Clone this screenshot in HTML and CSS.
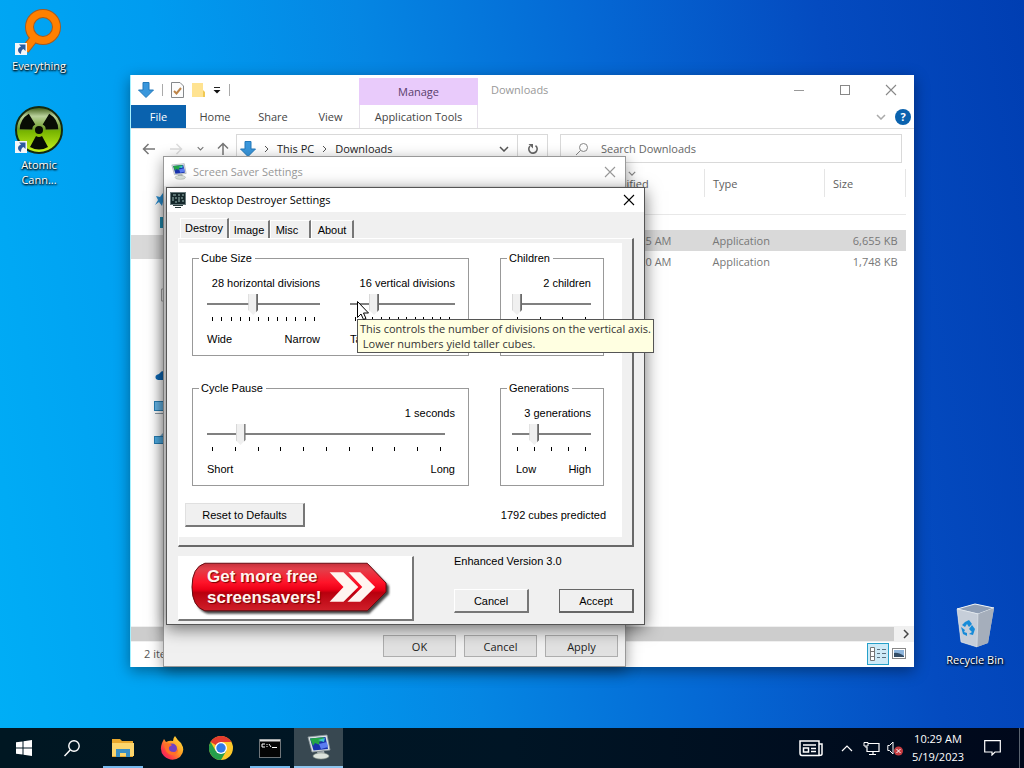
FILE: index.html
```html
<!DOCTYPE html>
<html lang="en">
<head>
    <meta charset="UTF-8">
    <meta name="viewport" content="width=device-width, initial-scale=1.0">
    <title>Desktop</title>
    <link rel="stylesheet" href="styles.css">
</head>
<body>
    <svg width="0" height="0" class="defs" aria-hidden="true">
        <symbol id="close" viewBox="0 0 12 12"><path d="M1 1 L11 11 M11 1 L1 11" fill="none" stroke="currentColor" stroke-width="1.1"/></symbol>
        <symbol id="shortcut" viewBox="0 0 12 12"><rect width="12" height="12" fill="#f4f6f8"/><path d="M4 1.500 H10.500 V8 L8.500 6 C6.500 7 6 8.500 6 11 C2 9 2 5 6 3.500 Z" fill="#2d5c9e"/></symbol>
        <symbol id="down-arrow" viewBox="0 0 16 16"><path d="M5 0.500 H11 V8 H15.500 L8 15.500 L0.500 8 H5 Z" fill="#3a97dc" stroke="#2379ba" stroke-width="1"/></symbol>
        <symbol id="chevron" viewBox="0 0 10 6"><path d="M1 1 L5 5 L9 1" fill="none" stroke="currentColor" stroke-width="1.5"/></symbol>
        <symbol id="display" viewBox="0 0 24 26">
            <path d="M1 3 L20 1 L23 16 L5 18 Z" fill="#dfe4e6" stroke="#8d989c" stroke-width="0.800"/>
            <path d="M3 4.500 L18.500 3 L21 15 L6.500 16.500 Z" fill="#1832ac"/>
            <path d="M3 4.500 L17 3.200 L15 7 L12 8 L13 11 L8 9 L6 12 Z" fill="#24a447"/>
            <path d="M12 10 L20 8 L21 13 L14 15 Z" fill="#5b7df0"/>
            <path d="M11 6 L18 4 L17 8 Z" fill="#3fc6c9"/>
            <path d="M10 18 L17 17 L18 21 H11 Z" fill="#aab3b4"/>
            <ellipse cx="14" cy="22" rx="8" ry="3" fill="#dce3dc" stroke="#8f9b91" stroke-width="0.600"/>
        </symbol>
    </svg>

    <main class="desktop">
        <a class="shortcut everything" href="#">
            <svg width="54" height="48" viewBox="0 0 54 48" aria-hidden="true">
                <path d="M13 43 L24 29" stroke="#a85b1d" stroke-width="9"/>
                <circle cx="31" cy="20" r="13.500" fill="none" stroke="#a85b1d" stroke-width="9"/>
                <path d="M13 43 L24 29" stroke="#ff8000" stroke-width="7"/>
                <circle cx="31" cy="20" r="13.500" fill="none" stroke="#ff8000" stroke-width="7"/>
                <use href="#shortcut" x="3" y="36" width="12" height="12"/>
            </svg>
            <span>Everything</span>
        </a>
        <a class="shortcut atomic" href="#">
            <svg width="54" height="50" viewBox="0 0 54 50" aria-hidden="true">
                <defs>
                    <linearGradient id="glow" x1="0" y1="0" x2="0" y2="1">
                        <stop offset="0" stop-color="#35540d"/><stop offset=".2" stop-color="#b9d19b"/>
                        <stop offset=".48" stop-color="#6f9d2c"/><stop offset=".52" stop-color="#76b300"/>
                        <stop offset="1" stop-color="#c9f51e"/>
                    </linearGradient>
                </defs>
                <circle cx="27" cy="25" r="23" fill="url(#glow)" stroke="#142a10" stroke-width="2"/>
                <circle cx="27" cy="25" r="4" fill="#080c04"/>
                <path id="blade" d="M24 31 L18 42 Q27 47 36 42 L30 31 Q27 33 24 31Z" fill="#080c04"/>
                <use href="#blade" transform="rotate(120 27 25)"/>
                <use href="#blade" transform="rotate(240 27 25)"/>
                <use href="#shortcut" x="3" y="36" width="12" height="12"/>
            </svg>
            <span>Atomic<br>Cann...</span>
        </a>
        <a class="shortcut recycle" href="#">
            <svg width="40" height="46" viewBox="0 0 40 46" aria-hidden="true">
                <path d="M2 6 L20 1 L39 5 L33 40 L22 44 L6 39 Z" fill="#b7c2d2"/>
                <path d="M2 6 L20 1 L39 5 L23 11 Z" fill="#8f9eb4" stroke="#eef3f7"/>
                <path d="M23 11 L39 5 L33 40 L22 44 Z" fill="#a5aebb"/>
                <path d="M2 6 L23 11 L22 44 L6 39 Z" fill="#c6ced9" stroke="#e7ecf1" stroke-width="0.500"/>
                <path d="M10 19 L14 17 L17 21 L14 24 L12 21 L10 24 L7 22 Z M17 22 L20 26 L18 32 L14 31 L17 29 L14 26 Z M6 24 L10 27 L9 29 L12 30 V33 L8 31 Z" fill="#178bd8"/>
            </svg>
            <span>Recycle Bin</span>
        </a>

        <section class="window explorer">
            <header class="ex-title">
                <div class="quick">
                    <svg width="16" height="18"><use href="#down-arrow" width="16" height="16" y="1"/></svg>
                    <i class="rule"></i>
                    <svg width="13" height="16" viewBox="0 0 13 16"><path d="M.5 .5 H9 L12.500 4 V15.500 H.5Z" fill="#fcfcfc" stroke="#85888b"/><path d="M3 9 L5.500 11.500 L10 6" fill="none" stroke="#bd8448" stroke-width="2"/></svg>
                    <svg width="13" height="16" viewBox="0 0 13 16"><path d="M0 1 H11 V9 L13 11 V15 H0Z" fill="#ffe391"/><path d="M11 8 V15 H13 V10Z" fill="#f1c953"/></svg>
                    <svg width="8" height="8" viewBox="0 0 8 8"><path d="M1 1.500 H7" stroke="#222"/><path d="M.5 4 H7.500 L4 7.500Z" fill="#111"/></svg>
                    <i class="rule"></i>
                </div>
                <div class="manage">Manage</div>
                <h2>Downloads</h2>
                <div class="controls">
                    <button type="button" aria-label="Minimize"><svg width="12" height="12"><path d="M1 6.500 H11" stroke="#999"/></svg></button>
                    <button type="button" aria-label="Maximize"><svg width="12" height="12"><rect x="1.500" y="1.500" width="9" height="9" fill="none" stroke="#888"/></svg></button>
                    <button type="button" aria-label="Close"><svg width="12" height="12"><use href="#close"/></svg></button>
                </div>
            </header>
            <nav class="ribbon">
                <a class="file" href="#">File</a>
                <a href="#">Home</a>
                <a href="#">Share</a>
                <a href="#">View</a>
                <a class="tools" href="#">Application Tools</a>
                <span class="help">
                    <svg width="10" height="6"><use href="#chevron"/></svg>
                    <button type="button" aria-label="Help">?</button>
                </span>
            </nav>
            <div class="address">
                <div class="history">
                    <svg width="14" height="12" viewBox="0 0 14 12"><path d="M13 6 H1.500 M6.500 1 L1.500 6 L6.500 11" fill="none" stroke="#777" stroke-width="1.500"/></svg>
                    <svg width="14" height="12" viewBox="0 0 14 12"><path d="M1 6 H12.500 M7.500 1 L12.500 6 L7.500 11" fill="none" stroke="#ddd" stroke-width="1.500"/></svg>
                    <svg width="7" height="5"><use href="#chevron"/></svg>
                    <svg width="12" height="13" viewBox="0 0 12 13"><path d="M6 13 V1.500 M1 6.500 L6 1.500 L11 6.500" fill="none" stroke="#777" stroke-width="1.500"/></svg>
                </div>
                <div class="path">
                    <svg width="16" height="16"><use href="#down-arrow"/></svg>
                    <svg width="5" height="8" viewBox="0 0 5 8"><path d="M1 1 L4 4 L1 7" fill="none" stroke="#555"/></svg>
                    <span>This PC</span>
                    <svg width="5" height="8" viewBox="0 0 5 8"><path d="M1 1 L4 4 L1 7" fill="none" stroke="#555"/></svg>
                    <span>Downloads</span>
                    <svg class="drop" width="10" height="6"><use href="#chevron"/></svg>
                    <button type="button" aria-label="Refresh"><svg width="12" height="12" viewBox="0 0 12 12"><path d="M3 3 A4.200 4.200 0 1 0 8.500 2.600" fill="none" stroke="#666" stroke-width="1.600"/><path d="M1.500 1 H6 V5.500Z" fill="#666"/></svg></button>
                </div>
                <div class="search">
                    <svg width="14" height="14" viewBox="0 0 14 14"><circle cx="8.500" cy="5.500" r="4" fill="none" stroke="#888"/><path d="M5.500 8.500 L1 13" stroke="#888"/></svg>
                    <input type="search" aria-label="Search Downloads" placeholder="Search Downloads">
                </div>
            </div>
            <div class="ex-body">
                <ul class="places">
                    <li><svg width="16" height="16" viewBox="0 0 16 16"><path d="M2 5 L6 6 L9 2 L14 7 L9 11 L8 15 L5 11 L1 14 L4 9Z" fill="#2b91d4"/></svg></li>
                    <li><svg width="16" height="16" viewBox="0 0 16 16"><rect x="6" y="2" width="10" height="11" fill="#2492b6"/></svg></li>
                    <li class="current"></li>
                    <li></li>
                    <li><svg width="16" height="16" viewBox="0 0 16 16"><path d="M7.500 2 H14 V14 H7.500Z" fill="#fff" stroke="#aaa"/></svg></li>
                    <li></li>
                    <li></li>
                    <li class="root"><svg width="16" height="16" viewBox="0 0 16 16"><path d="M2 12 Q0 8 5 7 Q9 1 16 6 V13 H4Z" fill="#0d69b7"/></svg></li>
                    <li class="root"><svg width="16" height="16" viewBox="0 0 16 16"><rect x=".5" y="2.500" width="15" height="9" fill="#68b7e9" stroke="#287fb5"/><path d="M1 14.500 H16" stroke="#8b9ba7"/></svg></li>
                    <li class="root"><svg width="16" height="16" viewBox="0 0 16 16"><rect x=".5" y="5.500" width="15" height="7" fill="#51aee5" stroke="#287fb5"/><path d="M6 5 L10 1 L16 5Z" fill="#7aaed0"/></svg></li>
                </ul>
                <table class="files">
                    <thead>
                        <tr><th>Name</th><th class="date">Date modified<svg width="8" height="5"><use href="#chevron"/></svg></th><th class="type">Type</th><th class="size">Size</th></tr>
                    </thead>
                    <tbody>
                        <tr class="group"><td colspan="4"></td></tr>
                        <tr class="selected"><td></td><td>10:25 AM</td><td>Application</td><td class="num">6,655 KB</td></tr>
                        <tr><td></td><td>10:20 AM</td><td>Application</td><td class="num">1,748 KB</td></tr>
                    </tbody>
                </table>
            </div>
            <div class="hscroll"><i></i><svg width="6" height="10" viewBox="0 0 6 10"><path d="M1 1 L5 5 L1 9" fill="none" stroke="#444" stroke-width="1.500"/></svg></div>
            <footer class="status">
                <span>2 items</span>
                <button type="button" class="on" aria-label="Details view"><svg width="18" height="14" viewBox="0 0 18 14"><path d="M1.500 .5 H5.500 V13.500 H1.500Z M1.500 4.500 H5.500 M1.500 9.500 H5.500" fill="#fff" stroke="#777"/><path d="M8 2.500 H11 M8 6.500 H11 M8 10.500 H11 M13 2.500 H17 M13 6.500 H17 M13 10.500 H17" stroke="#587080"/></svg></button>
                <button type="button" aria-label="Thumbnail view"><svg width="14" height="11" viewBox="0 0 14 11"><rect x=".5" y=".5" width="13" height="10" fill="#fff" stroke="#888"/><rect x="2" y="2" width="10" height="7" fill="#8fb6dd"/><path d="M2 5 Q6 4 12 8 V9 H2Z" fill="#344d66"/></svg></button>
            </footer>
        </section>

        <section class="window saver">
            <header class="dlg-title">
                <svg width="16" height="17"><use href="#display"/></svg>
                <h2>Screen Saver Settings</h2>
                <button type="button" aria-label="Close"><svg width="12" height="12"><use href="#close"/></svg></button>
            </header>
            <footer>
                <button type="button">OK</button>
                <button type="button">Cancel</button>
                <button type="button">Apply</button>
            </footer>
        </section>

        <section class="window destroyer">
            <header class="dlg-title">
                <svg width="16" height="16" viewBox="0 0 16 16"><rect x=".5" y=".5" width="15" height="12" fill="#15282b" stroke="#6b7c7e"/><path d="M3 3 H6 M8 3 H10 M12 3 H14 M3 5 V9 M5 6 H7 M9 5 V10 M11 6 H13 M12 9 H14 M5 10 H7" stroke="#9cbab6"/><path d="M3 13.500 H13 M5 15.500 H11" stroke="#26393a"/></svg>
                <h2>Desktop Destroyer Settings</h2>
                <button type="button" aria-label="Close"><svg width="12" height="12"><use href="#close"/></svg></button>
            </header>
            <div class="tabs" role="tablist">
                <button type="button" role="tab" class="active" aria-selected="true">Destroy</button>
                <button type="button" role="tab">Image</button>
                <button type="button" role="tab" class="misc">Misc</button>
                <button type="button" role="tab" class="about">About</button>
            </div>
            <form class="panel" id="settings">
                <div class="page">
                    <div class="groups">
                        <fieldset class="cube">
                            <legend>Cube Size</legend>
                            <div class="control">
                                <label for="horizontal">28 horizontal divisions</label>
                                <input type="range" id="horizontal" min="12" max="52" value="28">
                                <div class="ticks"><i></i><i></i><i></i><i></i><i></i><i></i><i></i><i></i><i></i><i></i><i></i><i></i></div>
                                <div class="ends"><span>Wide</span><span>Narrow</span></div>
                            </div>
                            <div class="control">
                                <label for="vertical">16 vertical divisions</label>
                                <input type="range" id="vertical" min="8" max="48" value="16">
                                <div class="ticks"><i></i><i></i><i></i><i></i><i></i><i></i><i></i><i></i><i></i><i></i><i></i><i></i></div>
                                <div class="ends"><span>Tall</span></div>
                            </div>
                        </fieldset>
                        <fieldset class="small">
                            <legend>Children</legend>
                            <div class="control">
                                <label for="children">2 children</label>
                                <input type="range" id="children" min="2" max="5" value="2">
                                <div class="ticks"><i></i><i></i><i></i><i></i></div>
                            </div>
                        </fieldset>
                        <fieldset class="pause">
                            <legend>Cycle Pause</legend>
                            <div class="control">
                                <label for="pause">1 seconds</label>
                                <input type="range" id="pause" min="0" max="8" value="1">
                                <div class="ticks"><i></i><i></i><i></i><i></i><i></i><i></i><i></i><i></i><i></i><i></i><i></i></div>
                                <div class="ends"><span>Short</span><span>Long</span></div>
                            </div>
                        </fieldset>
                        <fieldset class="small">
                            <legend>Generations</legend>
                            <div class="control">
                                <label for="generations">3 generations</label>
                                <input type="range" id="generations" min="2" max="6" value="3">
                                <div class="ticks"><i></i><i></i><i></i><i></i><i></i></div>
                                <div class="ends"><span>Low</span><span>High</span></div>
                            </div>
                        </fieldset>
                    </div>
                    <div class="page-foot">
                        <button type="reset" class="classic">Reset to Defaults</button>
                        <output>1792 cubes predicted</output>
                    </div>
                </div>
            </form>
            <div class="bottom">
                <a class="banner" href="#">
                    <svg width="200" height="54" viewBox="0 0 202 54" aria-hidden="true">
                        <defs>
                            <linearGradient id="red" x1="0" y1="0" x2="0" y2="1">
                                <stop offset="0" stop-color="#c5303a"/><stop offset=".12" stop-color="#e2404b"/>
                                <stop offset=".4" stop-color="#ff1429"/><stop offset=".55" stop-color="#ee0017"/><stop offset=".62" stop-color="#b8000e"/>
                                <stop offset="1" stop-color="#d0202a"/>
                            </linearGradient>
                            <filter id="soft"><feGaussianBlur stdDeviation="1"/></filter>
                        </defs>
                        <path d="M17 4 H180 L200 24 V32 L180 52 H17 Q4 49 4 28 Q4 7 17 4Z" fill="#444" filter="url(#soft)"/>
                        <path d="M14 1 H178 L197 21 V30 L178 49 H14 Q1 45 1 25 Q1 5 14 1Z" fill="url(#red)" stroke="#650a10"/>
                        <path d="M140 10 H154 L169 25 L154 40 H140 L154 25Z M159 10 H171 L186 25 L171 40 H158 L173 25Z" fill="#fff5f0"/>
                    </svg>
                    <strong>Get more free<br>screensavers!</strong>
                </a>
                <div class="actions">
                    <p>Enhanced Version 3.0</p>
                    <div>
                        <button type="button" class="classic">Cancel</button>
                        <button type="submit" form="settings" class="classic default">Accept</button>
                    </div>
                </div>
            </div>
        </section>

        <div class="tooltip" role="tooltip">This controls the number of divisions on the vertical axis.<br>&nbsp;Lower numbers yield taller cubes.</div>
        <svg class="pointer" width="12" height="19" viewBox="0 0 12 19" aria-hidden="true"><path d="M.5 .5 V16.500 L4 13 L6.500 18.500 L9 17.500 L6.500 12 H11.500Z" fill="#fff" stroke="#000"/></svg>
    </main>

    <footer class="taskbar">
        <button type="button" class="start" aria-label="Start"><svg width="16" height="16" viewBox="0 0 16 16"><path d="M0 2.300 L6.500 1.400 V7.500 H0Z M7.500 1.200 L16 0 V7.500 H7.500Z M0 8.500 H6.500 V14.600 L0 13.700Z M7.500 8.500 H16 V16 L7.500 14.800Z" fill="#fff"/></svg></button>
        <button type="button" class="start" aria-label="Search"><svg width="16" height="17" viewBox="0 0 16 17"><circle cx="10" cy="6" r="5.200" fill="none" stroke="#fff" stroke-width="1.400"/><path d="M6.200 10 L.5 16" stroke="#fff" stroke-width="1.500"/></svg></button>
        <div class="apps">
            <button type="button" class="open" aria-label="File Explorer"><svg width="22" height="18" viewBox="0 0 22 18"><path d="M0 0 H8 L10 2 H21 V18 H0Z" fill="#e9a82d"/><path d="M0 4 H22 V17 H0Z" fill="#fcd66d"/><path d="M4 18 V10 H18 V18 H14 V14 H8 V18Z" fill="#3a8fc4"/></svg></button>
            <button type="button" aria-label="Firefox"><svg width="24" height="24" viewBox="0 0 24 24">
                <defs><linearGradient id="fox" x1="1" y1="0" x2="0" y2="1"><stop offset="0" stop-color="#fff044"/><stop offset=".45" stop-color="#ff9a22"/><stop offset=".75" stop-color="#ff3647"/><stop offset="1" stop-color="#e3157c"/></linearGradient></defs>
                <path d="M2 7 L4 3 L6 6 Q10 4 13 5 Q13 2 15 0 Q18 5 21 7 Q26 15 20 21 Q12 27 4 20 Q-1 15 2 7Z" fill="url(#fox)"/>
                <circle cx="12" cy="12.500" r="5" fill="#7141c3"/><path d="M4 8 Q9 6 12 9 L9 11 Q8 16 14 16 Q17 16 18 12 Q19 19 12 19 Q5 18 4 8Z" fill="#ff7027"/></svg></button>
            <button type="button" aria-label="Chrome"><svg width="24" height="24" viewBox="0 0 24 24"><circle cx="12" cy="12" r="12" fill="#fdc82a"/><path d="M12 12 L1.600 6 A12 12 0 0 1 22.400 6 H12Z" fill="#e33b2e"/><path d="M1.600 6 A12 12 0 0 0 12 24 L17.200 15 L12 12 L6.800 15Z" fill="#269f4b"/><circle cx="12" cy="12" r="6" fill="#fff"/><circle cx="12" cy="12" r="4.700" fill="#307ce8"/></svg></button>
            <button type="button" class="open" aria-label="Command Prompt"><svg width="22" height="19" viewBox="0 0 22 19"><rect x=".5" y=".5" width="21" height="18" fill="#050505" stroke="#70767a"/><path d="M1 1.500 H21" stroke="#ddd" stroke-width="2"/><path d="M6 5 H3 V8 H6 M8 5 V6 M8 7 V8 M10 5 L12 8 M13 8.500 H18" fill="none" stroke="#fff"/></svg></button>
            <button type="button" class="active" aria-label="Screen saver"><svg width="24" height="26"><use href="#display"/></svg></button>
        </div>
        <div class="tray">
            <button type="button" class="news" aria-label="News"><svg width="24" height="17" viewBox="0 0 24 17"><path d="M1 1 H20 V15.500 H3 Q1 15.500 1 13Z M20 4 H23 V14 Q23 15.500 20 15.500" fill="none" stroke="#fff" stroke-width="1.500"/><path d="M4 5 H17 M12 8.500 H17 M12 11.500 H17" stroke="#fff" stroke-width="1.500"/><rect x="4.500" y="8" width="5" height="4" fill="none" stroke="#fff" stroke-width="1.500"/></svg></button>
            <button type="button" aria-label="Hidden icons"><svg width="12" height="7" viewBox="0 0 12 7"><path d="M1 6 L6 1 L11 6" fill="none" stroke="#fff" stroke-width="1.200"/></svg></button>
            <button type="button" aria-label="Network"><svg width="17" height="15" viewBox="0 0 17 15"><path d="M5 2.500 H16 V10.500 H4 V6 M10 10.500 V13.500 M6 13.500 H13" fill="none" stroke="#fff" stroke-width="1.200"/><path d="M1 1.500 H5 V5 H1Z M3 5 V7" fill="none" stroke="#fff"/></svg></button>
            <button type="button" aria-label="Volume muted"><svg width="16" height="15" viewBox="0 0 16 15"><path d="M.8 4.500 H2.500 L6 1 V13 L2.500 9.500 H.8Z" fill="none" stroke="#fff"/><circle cx="11.500" cy="10" r="4.500" fill="#c63c41"/><path d="M9.500 8 L13.500 12 M13.500 8 L9.500 12" stroke="#fff"/></svg></button>
            <time datetime="2023-05-19T10:29">10:29 AM<br>5/19/2023</time>
            <button type="button" class="notify" aria-label="Notifications"><svg width="17" height="16" viewBox="0 0 17 16"><path d="M.7 .7 H16.300 V12 H11 L8 15 V12 H.7Z" fill="none" stroke="#fff" stroke-width="1.200"/></svg></button>
            <span class="peek"></span>
        </div>
    </footer>
</body>
</html>
```

FILE: styles.css
```css
* {
    box-sizing: border-box;
}
body {
    margin: 0;
    min-height: 100vh;
    display: flex;
    flex-direction: column;
    font-family: "Open Sans", "Noto Sans", sans-serif;
    font-size: 11px;
    line-height: 15px;
    color: #222;
    overflow: hidden;
}
button, input {
    font: inherit;
    color: inherit;
}
button {
    padding: 0;
    border: none;
    background: none;
    display: flex;
    align-items: center;
    justify-content: center;
}
a {
    color: inherit;
    text-decoration: none;
}
h2, p, ul {
    margin: 0;
    padding: 0;
}
h2 {
    font-size: 11px;
    font-weight: normal;
}
svg {
    flex: none;
    display: block;
}
.defs {
    position: absolute;
}

/* desktop */
.desktop {
    flex: 1;
    position: relative;
    background: linear-gradient(80deg, #00aef6 0%, #009cf0 24%, #0586e3 42%, #0568d4 62%, #044bc0 82%, #003eb2 100%);
}
.shortcut {
    position: absolute;
    width: 76px;
    display: flex;
    flex-direction: column;
    align-items: center;
    gap: 3px;
    color: #fff;
    text-align: center;
    text-shadow: 1px 1px 2px #000, 0 1px 2px #000;
}
.everything {
    left: 1px;
    top: 7px;
}
.atomic {
    left: 1px;
    top: 105px;
    gap: 2px;
}
.recycle {
    right: 11px;
    top: 603px;
}
.window {
    position: absolute;
    display: flex;
    flex-direction: column;
    box-shadow: 0 4px 14px rgba(0, 0, 0, 0.4);
}

/* explorer */
.explorer {
    left: 130px;
    top: 75px;
    width: 784px;
    height: 592px;
    background: #fff;
    border-left: 1px solid #a4f0ff;
    color: #555;
}
.ex-title {
    display: flex;
    height: 30px;
}
.quick {
    width: 228px;
    padding-left: 7px;
    display: flex;
    align-items: center;
    gap: 8px;
}
.rule {
    width: 1px;
    height: 12px;
    background: #aaa;
}
.manage {
    width: 119px;
    margin-top: 3px;
    background: #e9cbfb;
    color: #59406b;
    text-align: center;
    line-height: 28px;
}
.ex-title h2 {
    margin-left: 13px;
    line-height: 30px;
    color: #999;
}
.controls {
    margin-left: auto;
    display: flex;
    color: #888;
}
.controls button {
    width: 46px;
}
.ribbon {
    display: flex;
    height: 24px;
    border-bottom: 1px solid #ddd;
    line-height: 23px;
    text-align: center;
    color: #444;
}
.ribbon a {
    width: 58px;
}
.ribbon .file {
    width: 55px;
    background: #0a62ae;
    color: #fff;
}
.ribbon .tools {
    width: 119px;
    border: solid #e6e0ea;
    border-width: 0 1px;
}
.ribbon .file + a + a + a {
    width: 57px;
}
.help {
    margin-left: auto;
    padding-right: 3px;
    display: flex;
    align-items: center;
    gap: 9px;
    color: #aaa;
}
.help button {
    width: 16px;
    height: 16px;
    border-radius: 50%;
    background: #0a62ae;
    color: #fff;
    font-weight: bold;
}
.address {
    display: flex;
    padding: 5px 12px 5px 0;
    color: #444;
}
.history {
    width: 105px;
    padding: 0 7px 0 11px;
    display: flex;
    align-items: center;
    justify-content: space-between;
    color: #777;
}
.path {
    width: 312px;
    height: 29px;
    padding-left: 3px;
    border: 1px solid #d9d9d9;
    display: flex;
    align-items: center;
    gap: 8px;
    color: #222;
}
.path .drop {
    margin-left: auto;
    color: #555;
}
.path button {
    width: 30px;
    height: 100%;
    border-left: 1px solid #d9d9d9;
}
.search {
    flex: 1;
    margin-left: 12px;
    padding-left: 14px;
    border: 1px solid #d9d9d9;
    display: flex;
    align-items: center;
    gap: 12px;
}
.search input {
    flex: 1;
    padding: 0;
    border: none;
    outline: none;
    background: none;
}
.search input::placeholder {
    color: #666;
}
.ex-body {
    flex: 1;
    display: flex;
}
.places {
    width: 140px;
    padding-top: 19px;
    list-style: none;
}
.places li {
    height: 24px;
    padding: 4px 0 0 23px;
}
.places .current {
    background: #d9d9d9;
}
.places .root {
    margin-top: 8px;
}
.files {
    flex: 1;
    align-self: flex-start;
    margin: 1px 8px 0 0;
    border-collapse: collapse;
    table-layout: fixed;
    color: #777;
}
.files th {
    height: 28px;
    padding: 0 0 0 8px;
    border-right: 1px solid #e5e5e5;
    font-weight: normal;
    text-align: left;
    color: #606060;
}
.files .date {
    position: relative;
    width: 137px;
}
.date svg {
    position: absolute;
    left: 60px;
    top: 2px;
    color: #888;
}
.files .type {
    width: 120px;
}
.files .size {
    width: 81px;
}
.files td {
    height: 21px;
    padding: 0 8px;
}
.files .group td {
    height: 33px;
    background: linear-gradient(#e8e8e8, #e8e8e8) 0 17px / 100% 1px no-repeat;
}
.files .selected {
    background: #d9d9d9;
}
.files .num {
    text-align: right;
}
.files td:nth-child(2) {
    text-align: right;
    padding-right: 33px;
}
.hscroll {
    height: 16px;
    padding: 1px 5px 1px 0;
    background: #f0f0f0;
    display: flex;
    align-items: center;
    gap: 9px;
}
.hscroll i {
    flex: 1;
    height: 14px;
    background: #cdcdcd;
}
.status {
    display: flex;
    align-items: center;
    padding: 0 8px 2px 13px;
    height: 25px;
    gap: 3px;
}
.status span {
    margin-right: auto;
}
.status .on {
    width: 22px;
    height: 22px;
    border: 1px solid #26a0c9;
    background: #cdeaf7;
}

/* dialogs */
.dlg-title {
    display: flex;
    align-items: center;
    height: 29px;
    padding: 0 9px 0 7px;
    gap: 6px;
    background: #fff;
}
.dlg-title button {
    margin-left: auto;
}
.saver {
    left: 163px;
    top: 156px;
    width: 463px;
    height: 511px;
    background: #f0f0f0;
    border: 1px solid #999;
    justify-content: space-between;
}
.saver .dlg-title {
    color: #999;
}
.saver footer {
    display: flex;
    justify-content: flex-end;
    gap: 8px;
    padding: 0 7px 9px;
}
.saver footer button {
    width: 73px;
    height: 22px;
    background: #e1e1e1;
    border: 1px solid #adadad;
}
.destroyer {
    left: 166px;
    top: 187px;
    width: 479px;
    background: #f0f0f0;
    border: 1px solid #555;
    font-family: "Liberation Sans", Arial, sans-serif;
    line-height: 14px;
    color: #000;
    box-shadow: 0 4px 16px rgba(0, 0, 0, 0.55);
}
.destroyer .dlg-title {
    height: 24px;
    padding: 0 9px 0 3px;
    gap: 5px;
    font-family: "Open Sans", "Noto Sans", sans-serif;
}
.tabs {
    display: flex;
    align-items: flex-end;
    padding: 6px 0 0 13px;
}
.tabs button {
    width: 41px;
    height: 18px;
    border: solid;
    border-width: 1px 2px 0 1px;
    border-color: #fff #777 #fff #fff;
}
.tabs .active {
    width: 49px;
    height: 20px;
    padding-bottom: 2px;
}
.tabs .misc {
    padding-right: 6px;
}
.tabs .about {
    width: 43px;
}
.panel {
    margin: 0 10px 0 11px;
    padding: 4px 10px 8px 0;
    border: solid;
    border-width: 1px 2px 2px 1px;
    border-color: #fff #696969 #696969 #fff;
}
.page {
    background: #fff;
    padding: 8px 16px 10px 6px;
}
.groups {
    display: grid;
    grid-template-columns: 1fr 104px;
    gap: 25px 31px;
    padding: 0 2px 0 7px;
}
fieldset {
    min-width: 0;
    margin: 0;
    padding: 11px 13px 9px 14px;
    border: 1px solid #999;
}
legend {
    margin-left: -8px;
    padding: 0 3px 0 2px;
}
.cube {
    display: grid;
    grid-template-columns: 14fr 13fr;
    column-gap: 30px;
}
.small {
    padding: 11px 12px 9px 11px;
}
.small legend {
    margin-left: -5px;
}
.control label {
    display: block;
    text-align: right;
}
input[type="range"] {
    appearance: none;
    display: block;
    width: 100%;
    height: 21px;
    margin: 4px 0 2px;
    background: linear-gradient(#808080, #808080) 0 9px / 100% 2px no-repeat;
}
input[type="range"]::-webkit-slider-thumb {
    appearance: none;
    width: 10px;
    height: 21px;
    background: linear-gradient(to right, #d8d8d8 1px, #f0f0f0 1px, #f0f0f0 8px, #a0a0a0 8px, #696969 9px);
    clip-path: polygon(0 0, 100% 0, 100% 16px, 5px 100%, 0 16px);
}
.ticks {
    display: flex;
    justify-content: space-between;
    padding: 0 5px;
}
.ticks i {
    width: 1px;
    height: 4px;
    background: #000;
}
.ends {
    display: flex;
    justify-content: space-between;
    margin-top: 11px;
}
.small .ends {
    padding-left: 4px;
}
.pause input[type="range"] {
    width: calc(100% - 10px);
}
.pause .ticks {
    padding-right: 14px;
}
.page-foot {
    display: flex;
    justify-content: space-between;
    align-items: center;
    margin-top: 17px;
}
.classic {
    width: 75px;
    height: 24px;
    background: #f0f0f0;
    border: solid;
    border-width: 1px 2px 2px 1px;
    border-color: #fff #777 #777 #fff;
}
.page-foot .classic {
    width: 120px;
    border-left-color: #e0e0e0;
    border-top-color: #e0e0e0;
}
.default {
    border-color: #666;
}
.bottom {
    display: flex;
    padding: 9px 10px 3px 11px;
}
.banner {
    position: relative;
    width: 236px;
    height: 65px;
    padding: 5px 12px;
    background: #fff;
    border: solid;
    border-width: 1px 2px 2px 1px;
    border-color: #fff #777 #777 #fff;
}
.banner strong {
    position: absolute;
    left: 28px;
    top: 9px;
    font-size: 17px;
    line-height: 21px;
    color: #fff5f0;
    text-shadow: 1px 1px 1px #700;
}
.actions {
    flex: 1;
    display: flex;
    flex-direction: column;
    justify-content: space-between;
    padding: 0 0 8px 40px;
}
.actions p {
    margin-top: -2px;
}
.actions div {
    display: flex;
    justify-content: space-between;
}
.tooltip {
    position: absolute;
    left: 357px;
    top: 319px;
    padding: 1px 2px;
    background: #ffffe1;
    border: 1px solid #555;
    color: #333;
    white-space: nowrap;
}
.pointer {
    position: absolute;
    left: 357px;
    top: 301px;
}

/* taskbar */
.taskbar {
    display: flex;
    height: 40px;
    background: linear-gradient(to right, #001722, #001525 50%, #00081b);
    color: #fff;
}
.start {
    width: 48px;
}
.apps {
    display: flex;
    margin-left: 2px;
}
.apps button {
    width: 49px;
    position: relative;
}
.apps .open::after {
    content: "";
    position: absolute;
    left: 5px;
    right: 4px;
    bottom: 0;
    height: 2px;
    background: #76b9ed;
}
.apps .active {
    background: #384851;
    border-bottom: 2px solid #8fc5ee;
}
.tray {
    margin-left: auto;
    display: flex;
    align-items: stretch;
}
.tray button {
    width: 24px;
}
.tray .news {
    width: 32px;
    margin-right: 8px;
}
.tray time {
    width: 54px;
    margin-left: 4px;
    padding-top: 2px;
    text-align: center;
    line-height: 18px;
}
.tray .notify {
    width: 54px;
}
.peek {
    width: 5px;
    border-left: 1px solid #5b6470;
}
```
